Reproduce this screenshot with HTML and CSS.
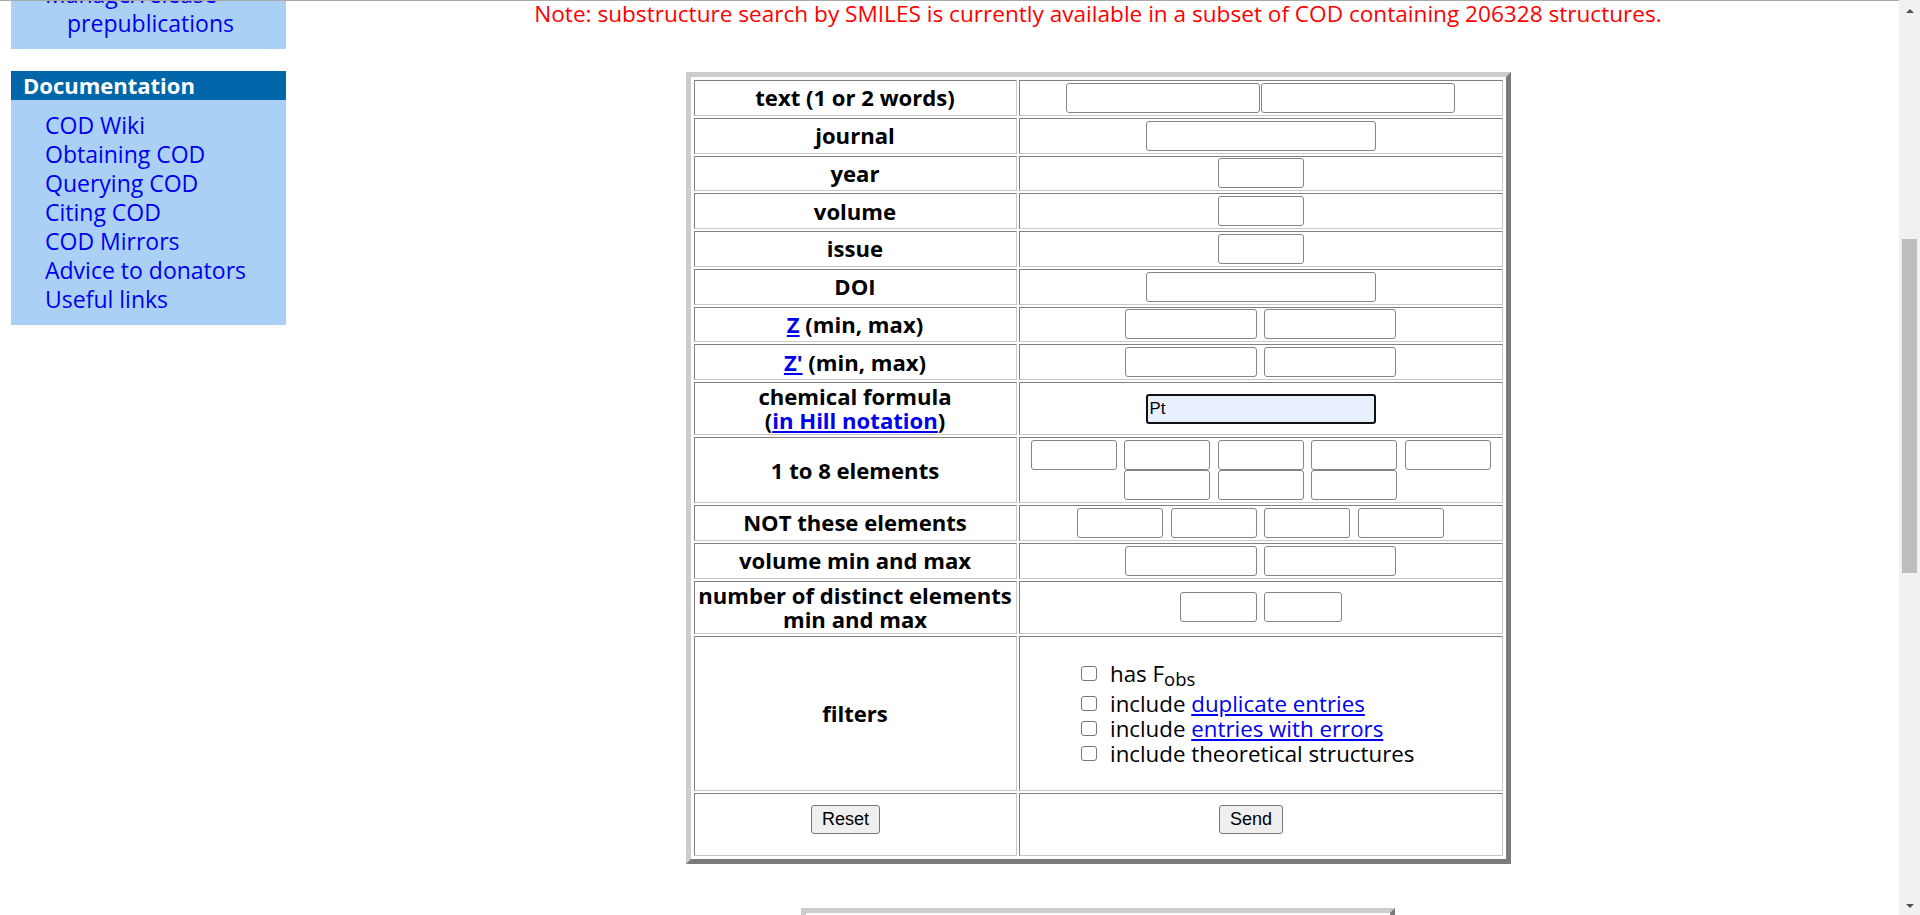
FILE: index.html
```html
<!DOCTYPE html>
<html lang="en">
<head>
<meta charset="utf-8">
<title>COD search</title>
<link rel="stylesheet" href="styles.css">
</head>
<body>
<div class="window">
  <div class="viewport">
    <div class="topline"></div>
    <div class="content">
      <aside class="sidebar">
        <div class="menu-box menu-box--cut">
          <a class="menu-link menu-link--wrap" href="#">Manage/release prepublications</a>
        </div>
        <div class="menu-head">Documentation</div>
        <div class="menu-box">
          <a class="menu-link" href="#">COD Wiki</a>
          <a class="menu-link" href="#">Obtaining COD</a>
          <a class="menu-link" href="#">Querying COD</a>
          <a class="menu-link" href="#">Citing COD</a>
          <a class="menu-link" href="#">COD Mirrors</a>
          <a class="menu-link" href="#">Advice to donators</a>
          <a class="menu-link" href="#">Useful links</a>
        </div>
      </aside>
      <main class="main">
        <p class="note">Note: substructure search by SMILES is currently available in a subset of COD containing 206328 structures.</p>
        <form class="search-form" action="#">
          <table class="search">
            <colgroup><col class="col-label"><col class="col-value"></colgroup>
            <tr class="r">
              <td class="lbl">text (1 or 2 words)</td>
              <td><div class="fields fields--tight"><input class="in w194" type="text"><input class="in w194" type="text"></div></td>
            </tr>
            <tr class="r">
              <td class="lbl">journal</td>
              <td><div class="fields"><input class="in w230" type="text"></div></td>
            </tr>
            <tr class="r">
              <td class="lbl">year</td>
              <td><div class="fields"><input class="in w86" type="text"></div></td>
            </tr>
            <tr class="r">
              <td class="lbl">volume</td>
              <td><div class="fields"><input class="in w86" type="text"></div></td>
            </tr>
            <tr class="r">
              <td class="lbl">issue</td>
              <td><div class="fields"><input class="in w86" type="text"></div></td>
            </tr>
            <tr class="r">
              <td class="lbl">DOI</td>
              <td><div class="fields"><input class="in w230" type="text"></div></td>
            </tr>
            <tr class="r">
              <td class="lbl"><a href="#">Z</a> (min, max)</td>
              <td><div class="fields"><input class="in w131" type="text"><input class="in w131" type="text"></div></td>
            </tr>
            <tr class="r">
              <td class="lbl"><a href="#">Z'</a> (min, max)</td>
              <td><div class="fields"><input class="in w131" type="text"><input class="in w131" type="text"></div></td>
            </tr>
            <tr class="r2">
              <td class="lbl">chemical formula<br>(<a href="#">in Hill notation</a>)</td>
              <td><div class="fields"><input class="in in--focus w230" type="text" value="Pt"></div></td>
            </tr>
            <tr class="r-el">
              <td class="lbl">1 to 8 elements</td>
              <td><div class="fields">
                <input class="in w86" type="text"><input class="in w86" type="text"><input class="in w86" type="text"><input class="in w86" type="text"><input class="in w86" type="text"><input class="in w86" type="text"><input class="in w86" type="text"><input class="in w86" type="text">
              </div></td>
            </tr>
            <tr class="r">
              <td class="lbl">NOT these elements</td>
              <td><div class="fields"><input class="in w86" type="text"><input class="in w86" type="text"><input class="in w86" type="text"><input class="in w86" type="text"></div></td>
            </tr>
            <tr class="r">
              <td class="lbl">volume min and max</td>
              <td><div class="fields"><input class="in w131" type="text"><input class="in w131" type="text"></div></td>
            </tr>
            <tr class="r2">
              <td class="lbl">number of distinct elements<br>min and max</td>
              <td><div class="fields fields--narrow"><input class="in w77" type="text"><input class="in w77" type="text"></div></td>
            </tr>
            <tr class="r-filt">
              <td class="lbl">filters</td>
              <td>
                <div class="filters">
                  <label class="flt flt--first"><input class="cb" type="checkbox">has F<sub>obs</sub></label>
                  <label class="flt"><input class="cb" type="checkbox">include <a href="#">duplicate entries</a></label>
                  <label class="flt"><input class="cb" type="checkbox">include <a href="#">entries with errors</a></label>
                  <label class="flt"><input class="cb" type="checkbox">include theoretical structures</label>
                </div>
              </td>
            </tr>
            <tr class="r-btn">
              <td><div class="btn-wrap"><button class="btn" type="reset">Reset</button></div></td>
              <td><div class="btn-wrap"><button class="btn" type="submit">Send</button></div></td>
            </tr>
          </table>
        </form>
        <div class="next-table"></div>
      </main>
    </div>
  </div>
  <div class="scrollbar">
    <div class="sb-btn sb-btn--up"><span class="sb-arrow sb-arrow--up"></span></div>
    <div class="sb-track"><div class="sb-thumb"></div></div>
    <div class="sb-btn sb-btn--down"><span class="sb-arrow sb-arrow--down"></span></div>
  </div>
</div>
</body>
</html>
```

FILE: styles.css
```css
html, body {
  margin: 0;
  padding: 0;
  height: 100%;
  overflow: hidden;
  background: #ffffff;
}

body {
  font-family: "Open Sans", "Noto Sans", sans-serif;
  color: #000000;
}

.window {
  display: flex;
  width: 1920px;
  height: 915px;
}

.viewport {
  flex: 1;
  min-width: 0;
  display: flex;
  flex-direction: column;
}

.topline {
  flex: none;
  height: 1px;
  background: #a9a9a9;
}

.content {
  flex: 1;
  min-height: 0;
  display: flex;
  overflow: hidden;
}

/* ---------- sidebar ---------- */
.sidebar {
  flex: none;
  width: 275px;
  margin: 0 11px;
}

.menu-box {
  background: #aad0f5;
  padding: 11px 0 11.25px 34px;
}

.menu-box--cut {
  margin-top: -32.5px;
  padding: 11px 0 11.5px 56px;
}

.menu-link {
  display: block;
  font-size: 23px;
  line-height: 29px;
  color: #0000ee;
  text-decoration: none;
}

.menu-link--wrap {
  text-indent: -22px;
}

.menu-head {
  margin-top: 22px;
  padding: 0 12px;
  background: #0066aa;
  color: #ffffff;
  font-weight: 700;
  font-size: 22px;
  line-height: 29px;
}

/* ---------- main ---------- */
.main {
  flex: 1;
  min-width: 0;
}

.note {
  margin: -2.5px 0 0;
  text-align: center;
  color: #ff0000;
  font-size: 22.6px;
  line-height: 29px;
  white-space: nowrap;
}

.search-form {
  margin: 0;
}

.search {
  box-sizing: border-box;
  width: 825px;
  margin: 44.5px auto 0;
  table-layout: fixed;
  border-collapse: separate;
  border-spacing: 2px;
  padding: 1px;
  border: 5px solid;
  border-color: #cccccc #7a7a7a #7a7a7a #cccccc;
}

.col-label { width: 323px; }
.col-value { width: 484px; }

.search td {
  padding: 0;
  border: 1px solid;
  border-color: #808080 #c8c8c8 #c8c8c8 #808080;
  text-align: center;
  vertical-align: middle;
}

.r { height: 35.75px; }
.r2 { height: 53px; }
.r-el { height: 66px; }
.r-filt { height: 155px; }
.r-btn { height: 63px; }

.search td.lbl {
  padding-bottom: 1px;
  font-weight: 700;
  font-size: 22.1px;
  line-height: 24px;
}

.lbl a {
  color: #0000ee;
  text-decoration: underline;
}

.fields {
  display: flex;
  flex-wrap: wrap;
  justify-content: center;
  column-gap: 7.5px;
}

.fields--tight { column-gap: 1px; }
.fields--narrow { column-gap: 7px; }

.in {
  box-sizing: border-box;
  height: 30px;
  margin: 0;
  padding: 0 3px;
  border: 1px solid #858585;
  border-radius: 3px;
  background: #ffffff;
  font-family: "Liberation Sans", Arial, sans-serif;
  font-size: 16.7px;
  color: #000000;
  outline: none;
}

.in--focus {
  border: 2px solid #111111;
  background: #e8f0fe;
  padding: 0 2px;
}

.w194 { width: 194px; }
.w230 { width: 230px; }
.w86 { width: 86px; }
.w131 { width: 131.5px; }
.w77 { width: 77.5px; }

/* ---------- filters ---------- */
.filters {
  text-align: left;
  padding-left: 61.5px;
  font-size: 22.3px;
}

.flt {
  display: block;
  line-height: 25px;
  white-space: nowrap;
}

.flt--first {
  padding-bottom: 5px;
}

.flt sub {
  font-size: 0.83em;
  vertical-align: -4px;
  line-height: 0;
}

.flt a {
  color: #0000ee;
  text-decoration: underline;
}

.cb {
  appearance: none;
  -webkit-appearance: none;
  box-sizing: border-box;
  width: 16px;
  height: 15px;
  margin: 0 13px 0 0;
  border: 1px solid #767676;
  border-radius: 3px;
  background: #ffffff;
  vertical-align: 1px;
}

/* ---------- buttons ---------- */
.btn-wrap {
  display: flex;
  justify-content: center;
  align-items: center;
}

.btn {
  box-sizing: border-box;
  height: 29px;
  margin: 0 19px 10px 0;
  padding: 0 10px;
  border: 1px solid #767676;
  border-radius: 3px;
  background: #efefef;
  font-family: "Liberation Sans", Arial, sans-serif;
  font-size: 18px;
  color: #000000;
}

/* ---------- next table (cut by viewport) ---------- */
.next-table {
  box-sizing: border-box;
  width: 594px;
  height: 40px;
  margin: 44px auto 0;
  border: 5px solid;
  border-color: #cccccc #7a7a7a #7a7a7a #cccccc;
}

/* ---------- scrollbar ---------- */
.scrollbar {
  flex: none;
  width: 21px;
  display: flex;
  flex-direction: column;
  background: #f1f1f1;
}

.sb-btn {
  flex: none;
  height: 17px;
  display: flex;
  justify-content: center;
}

.sb-btn--up { padding-top: 9px; box-sizing: border-box; }
.sb-btn--down { padding-top: 6px; box-sizing: border-box; }

.sb-arrow {
  width: 0;
  height: 0;
  border-left: 4.5px solid transparent;
  border-right: 4.5px solid transparent;
}

.sb-arrow--up { border-bottom: 4px solid #505050; }
.sb-arrow--down { border-top: 4px solid #505050; }

.sb-track {
  flex: 1;
  display: flex;
  justify-content: center;
}

.sb-thumb {
  width: 15px;
  height: 334px;
  margin-top: 222px;
  background: #bdbdbd;
}
```
